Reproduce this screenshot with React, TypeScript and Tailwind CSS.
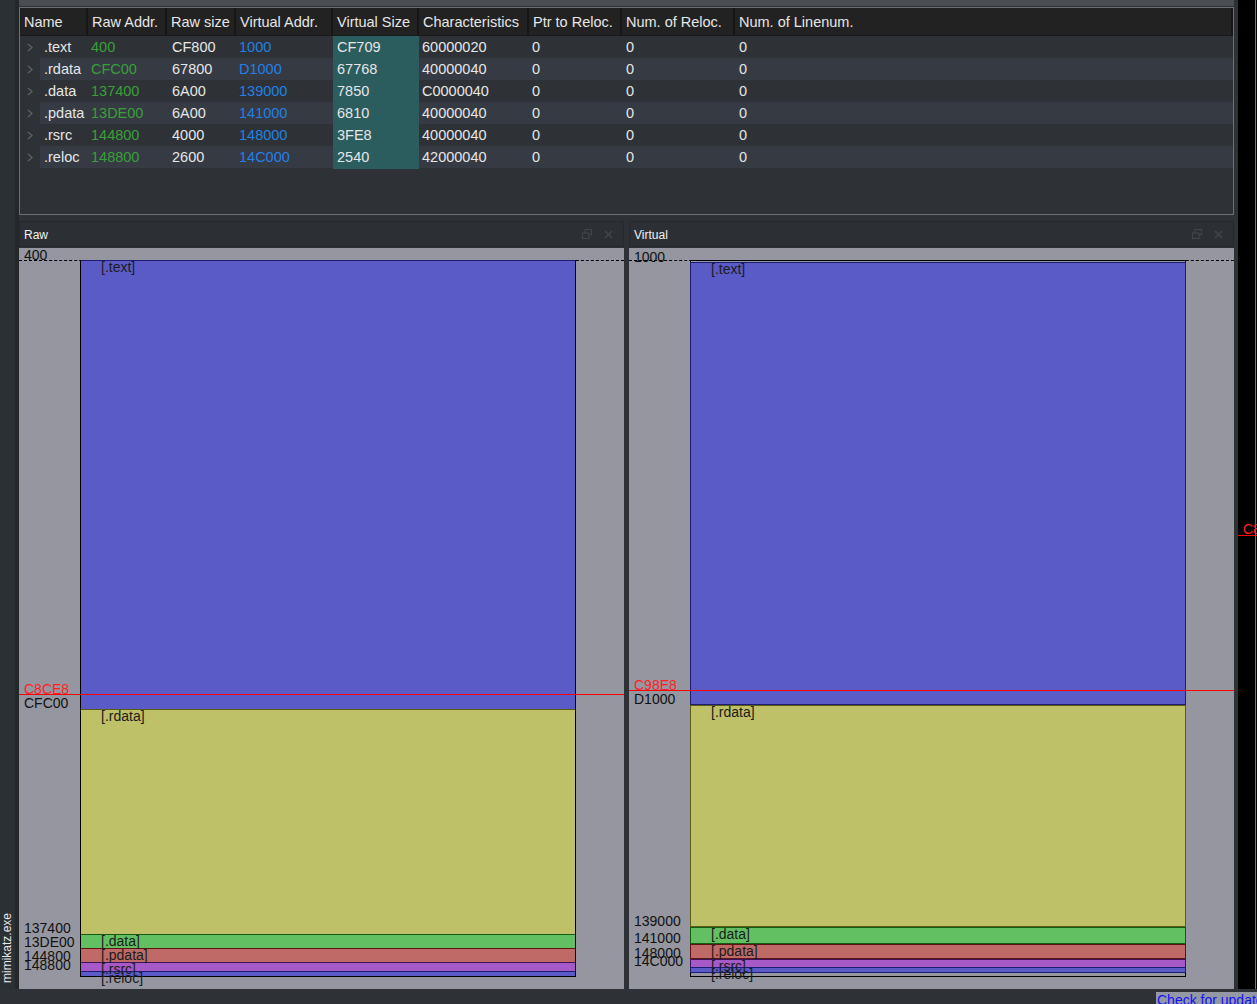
import React from 'react';

type Section = { name: string; start: number; end: number; fill: string; stroke: string };

const columns = ['Name', 'Raw Addr.', 'Raw size', 'Virtual Addr.', 'Virtual Size', 'Characteristics', 'Ptr to Reloc.', 'Num. of Reloc.', 'Num. of Linenum.'];

const rows = [
    ['.text', '400', 'CF800', '1000', 'CF709', '60000020'],
    ['.rdata', 'CFC00', '67800', 'D1000', '67768', '40000040'],
    ['.data', '137400', '6A00', '139000', '7850', 'C0000040'],
    ['.pdata', '13DE00', '6A00', '141000', '6810', '40000040'],
    ['.rsrc', '144800', '4000', '148000', '3FE8', '40000040'],
    ['.reloc', '148800', '2600', '14C000', '2540', '42000040'],
];

const colors = [
    { fill: '#5a5bc7', stroke: '#1c1c70' },
    { fill: '#bec167', stroke: '#5c5c14' },
    { fill: '#62c063', stroke: '#145c14' },
    { fill: '#bf6a66', stroke: '#5c1414' },
    { fill: '#a65ac8', stroke: '#3c145c' },
    { fill: '#5a5bc7', stroke: '#1c1c70' },
];

const names = ['.text', '.rdata', '.data', '.pdata', '.rsrc', '.reloc'];

const rawSections: Section[] = [
    [0x400, 0xcfc00],
    [0xcfc00, 0x137400],
    [0x137400, 0x13de00],
    [0x13de00, 0x144800],
    [0x144800, 0x148800],
    [0x148800, 0x14ae00],
].map(([s, e], i) => ({ name: names[i], start: s, end: e, ...colors[i] }));

const virtualSections: Section[] = [
    [0x1000, 0xd0709],
    [0xd1000, 0x138768],
    [0x139000, 0x140850],
    [0x141000, 0x147810],
    [0x148000, 0x14bfe8],
    [0x14c000, 0x14e540],
].map(([s, e], i) => ({ name: names[i], start: s, end: e, ...colors[i] }));

const hex = (n: number) => n.toString(16).toUpperCase();

function Chevron() {
    return (
        <svg width="6" height="9" viewBox="0 0 6 9" className="text-[#5d6266]">
            <polyline points="1,1 5,4.5 1,8" fill="none" stroke="currentColor" strokeWidth="1.3" />
        </svg>
    );
}

function SectionTable() {
    return (
        <div className="mt-[1px] h-[208px] border border-[#6d7073] bg-[#2e3236] text-[14.5px] text-[#e6e6e6]">
            <div className="h-[28px] grid grid-cols-[68px_79px_69px_97px_86px_110px_93px_113px_1fr] bg-[#222222] border-b border-[#181818]">
                {columns.map((c) => (
                    <div key={c} className="pl-1 leading-[29px] border-r-2 border-[#161616] whitespace-nowrap overflow-hidden">
                        {c}
                    </div>
                ))}
            </div>
            {rows.map((r, i) => {
                const stripe = i % 2 === 1 ? 'bg-[#353a43]' : 'bg-[#2e3236]';
                return (
                    <div key={r[0]} className="flex h-[22px] leading-[23px]">
                        <span className="w-[20px] flex items-center justify-center">
                            <Chevron />
                        </span>
                        <div className={`flex-1 grid grid-cols-[48px_79px_69px_97px_86px_110px_93px_113px_1fr] ${stripe}`}>
                            <div className="pl-1">{r[0]}</div>
                            <div className="pl-[3px] text-[#3a9f3a]">{r[1]}</div>
                            <div className="pl-[5px]">{r[2]}</div>
                            <div className="pl-[3px] text-[#2380e6]">{r[3]}</div>
                            <div className="pl-1 bg-[#2b5c5e]">{r[4]}</div>
                            <div className="pl-[3px]">{r[5]}</div>
                            <div className="pl-[3px]">0</div>
                            <div className="pl-1">0</div>
                            <div className="pl-1">0</div>
                        </div>
                    </div>
                );
            })}
        </div>
    );
}

interface CanvasProps {
    base: number;
    end: number;
    sections: Section[];
    marker: number;
    outline: boolean;
}

function MemoryCanvas({ base, end, sections, marker, outline }: CanvasProps) {
    const y = (a: number) => Math.round(12 + ((a - base) / (end - base)) * 716);
    const markerY = y(marker);
    return (
        <div className="relative h-[741px] bg-[#95969f] overflow-hidden text-[14px] leading-[16px]">
            <div className="absolute left-0 right-0 top-[12px] border-t border-dashed border-black" />
            {outline && <div className="absolute left-[61px] w-[496px] top-[12px] h-[717px] border border-black" />}
            {sections.map((s) => (
                <div
                    key={s.name}
                    className="absolute left-[61px] w-[496px] border"
                    style={{ top: y(s.start), height: Math.max(y(s.end) - y(s.start) + 1, 3), background: s.fill, borderColor: s.stroke }}
                />
            ))}
            {!outline && <div className="absolute left-[61px] w-[496px] top-[12px] h-[717px] border-l border-r border-b border-black" />}
            {sections.map((s) => (
                <div key={s.name + 'l'} className="absolute left-[82px] text-[#1b1b1b] whitespace-nowrap" style={{ top: y(s.start) - 1 }}>
                    [{s.name}]
                </div>
            ))}
            {sections.map((s, i) => (
                <div key={s.name + 'a'} className="absolute left-[5px] text-[#111111]" style={{ top: y(s.start) - (i === 0 ? 13 : 14) }}>
                    {hex(s.start)}
                </div>
            ))}
            <div className="absolute left-0 right-0 h-px bg-[#ff0000]" style={{ top: markerY }} />
            <div className="absolute left-[5px] text-[#ff1f1f]" style={{ top: markerY - 13 }}>
                {hex(marker)}
            </div>
        </div>
    );
}

function Panel({ title, children }: { title: string; children: React.ReactNode }) {
    return (
        <div className="w-[605px] flex flex-col">
            <div className="h-[26px] flex items-center justify-between bg-[#2c3034] border border-[#25292c] pl-[4px] pr-[10px]">
                <span className="text-[12px] text-[#f0f0f0] pt-[1px]">{title}</span>
                <div className="flex items-center gap-[12px] text-[#41464a]">
                    <svg width="10" height="10" viewBox="0 0 10 10">
                        <rect x="3" y="0.5" width="6.5" height="5" fill="none" stroke="currentColor" />
                        <rect x="0.5" y="4" width="6.5" height="5.5" fill="#2c3034" stroke="currentColor" />
                    </svg>
                    <svg width="9" height="9" viewBox="0 0 9 9">
                        <path d="M1 1 L8 8 M8 1 L1 8" stroke="currentColor" strokeWidth="1.6" />
                    </svg>
                </div>
            </div>
            <div className="mt-[1px]">{children}</div>
        </div>
    );
}

export default function App() {
    return (
        <div className="w-[1257px] h-[1004px] bg-[#2e3236] flex flex-col overflow-hidden font-['Liberation_Sans',Arial,sans-serif]">
            <div className="flex h-[989px]">
                <div className="w-[15px] bg-[#2b3035] flex flex-col justify-end pb-[6px] items-center">
                    <span className="[writing-mode:vertical-rl] rotate-180 text-[12px] text-[#e8e8e8] leading-[13px]">mimikatz.exe</span>
                </div>
                <div className="w-[4px] bg-[#24282b]" />
                <div className="w-[1215px] flex flex-col">
                    <div className="h-[6px] bg-[#4a4e52]" />
                    <SectionTable />
                    <div className="mt-[6px] flex gap-[5px]">
                        <Panel title="Raw">
                            <MemoryCanvas base={0x400} end={0x14ae00} sections={rawSections} marker={0xc8ce8} outline={false} />
                        </Panel>
                        <Panel title="Virtual">
                            <MemoryCanvas base={0} end={0x150000} sections={virtualSections} marker={0xc98e8} outline={true} />
                        </Panel>
                    </div>
                </div>
                <div className="w-[4px]" />
                <div className="w-[19px] bg-black relative overflow-hidden">
                    <div className="absolute left-0 right-0 top-[535px] h-px bg-[#ff0000]" />
                    <div className="absolute left-[5px] top-[521px] text-[14px] leading-[16px] text-[#ff1f1f] whitespace-nowrap">C8</div>
                    <div className="absolute top-0 bottom-0 left-[17px] w-px bg-[#6f7378]" />
                </div>
            </div>
            <div className="h-[15px] flex justify-end pt-[3px]">
                <div className="w-[101px] h-[12px] bg-[#9398a2] overflow-hidden">
                    <span className="block text-[14px] leading-[16px] text-[#1010ff] underline whitespace-nowrap pl-[1px]">Check for updates</span>
                </div>
            </div>
        </div>
    );
}
